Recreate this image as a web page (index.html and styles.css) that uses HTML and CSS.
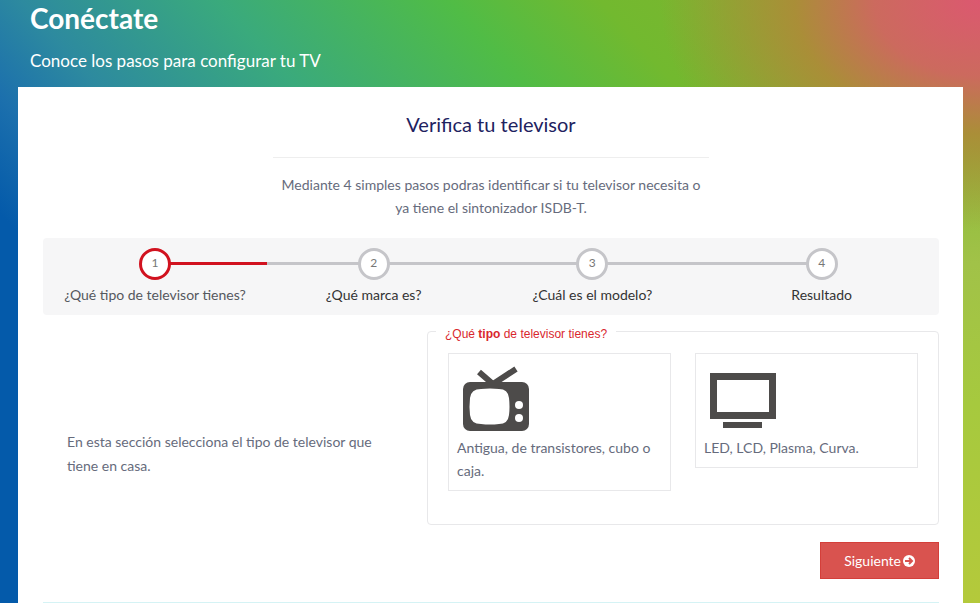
FILE: index.html
```html
<!DOCTYPE html>
<html lang="es">
<head>
  <meta charset="UTF-8">
  <meta name="viewport" content="width=device-width, initial-scale=1.0">
  <title>Conéctate</title>
  <link rel="stylesheet" href="styles.css">
</head>
<body>
  <header class="page-header">
    <h1>Conéctate</h1>
    <p>Conoce los pasos para configurar tu TV</p>
  </header>

  <main class="container">
    <section class="intro">
      <h2>Verifica tu televisor</h2>
      <hr>
      <p>Mediante 4 simples pasos podras identificar si tu televisor necesita o ya tiene el sintonizador ISDB-T.</p>
    </section>

    <ol class="steps">
      <li class="step active"><span class="number">1</span><span>¿Qué tipo de televisor tienes?</span></li>
      <li class="step"><span class="number">2</span><span>¿Qué marca es?</span></li>
      <li class="step"><span class="number">3</span><span>¿Cuál es el modelo?</span></li>
      <li class="step"><span class="number">4</span><span>Resultado</span></li>
    </ol>

    <form class="wizard">
      <div class="question">
        <p class="help">En esta sección selecciona el tipo de televisor que tiene en casa.</p>
        <fieldset>
          <legend>¿Qué <b>tipo</b> de televisor tienes?</legend>
          <div class="options">
            <label class="option">
              <input type="radio" name="tipo" value="antigua">
              <svg viewBox="0 0 66 66" aria-hidden="true">
                <path d="M16 6 L31 19 M53 3 L30 18" fill="none" stroke="#4d4b4a" stroke-width="6"/>
                <rect y="16" width="66" height="49" rx="7" fill="#4d4b4a"/>
                <path d="M18 23 Q27 22 36 23 Q45 23 46 32 Q47 41 46 49 Q45 58 36 58 Q27 59 18 58 Q8 58 7 49 Q6 41 7 32 Q8 23 18 23Z" fill="#fff"/>
                <circle cx="56" cy="39" r="4" fill="#fff"/>
                <circle cx="56" cy="52" r="4" fill="#fff"/>
              </svg>
              <span>Antigua, de transistores, cubo o caja.</span>
            </label>
            <label class="option">
              <input type="radio" name="tipo" value="plana">
              <svg viewBox="0 0 66 66" aria-hidden="true">
                <path d="M0 7H66V53H0Z M7 14V46H59V14Z" fill="#4d4b4a" fill-rule="evenodd"/>
                <rect x="13" y="56" width="39" height="6" fill="#4d4b4a"/>
              </svg>
              <span>LED, LCD, Plasma, Curva.</span>
            </label>
          </div>
        </fieldset>
      </div>
      <div class="actions">
        <button type="button">Siguiente
          <svg viewBox="0 0 12 12" aria-hidden="true">
            <circle cx="6" cy="6" r="6" fill="#fff"/>
            <path d="M2 6H9 M6 3L9 6L6 9" fill="none" stroke="#d9534f" stroke-width="2"/>
          </svg>
        </button>
      </div>
    </form>
    <hr class="divider">
  </main>
</body>
</html>
```

FILE: styles.css
```css
* { box-sizing: border-box; }
body {
  margin: 0;
  font-family: Lato, "Open Sans", sans-serif;
  font-size: 14px; line-height: 23px; color: #666b7c;
  background:
    radial-gradient(ellipse 320px 230px at 100% 0, #dc5870 0, #cc6a5e 33%, rgba(172, 140, 56, 0.95) 58%, rgba(130, 176, 48, 0) 100%),
    radial-gradient(circle at 100% 100%, #b4c93b 0, #a6c93e 200px, #a1c248 340px, rgba(150, 190, 60, 0) 520px),
    linear-gradient(48deg, #045aaa 0, #045aaa 23%, #1c70ad 30%, #2d8a9f 37%, #3aaa7c 50%, #50bc46 65%, #72b92f 75%, #8cb030 100%);
  background-attachment: fixed;
}
.page-header { padding: 0 30px; color: #fff; }
.page-header h1 {
  margin: 0; padding-top: 2px;
  font-size: 28px; line-height: 32px; font-weight: bold;
}
.page-header p {
  margin: 0; padding: 14px 0;
  font-size: 17px; line-height: 25px;
}
.container {
  margin: 0 17px 0 18px; padding: 24px 24px 0 25px;
  background: #fff;
}
.intro { max-width: 436px; margin: 0 auto; text-align: center; }
.intro h2 {
  margin: 0; font-size: 20px; line-height: 26px;
  font-weight: normal; color: #1e2260;
}
.intro hr { margin: 20px 0 15px; border: 0; border-top: 1px solid #eee; }
.intro p { margin: 0; }

.steps {
  display: grid; grid-template-columns: 21fr 20fr 21fr 22fr;
  margin: 19px 0 8px; padding: 10px 0 9px; list-style: none;
  background: #f6f6f7; border-radius: 4px; color: #333;
}
.step {
  position: relative;
  display: flex; flex-direction: column; align-items: center; gap: 3px;
}
/* connecting line behind the circles */
.step::before {
  content: ""; position: absolute;
  top: 14px; left: 0; right: 0; height: 3px;
  background: #c5c5c9;
}
.step:first-child::before { left: 50%; }
.step:last-child::before { right: 50%; }
.step.active { color: #55585e; }
.step.active::before { background: #d1121f; }
.number {
  position: relative;
  width: 32px; height: 32px;
  border: 3px solid #c5c5c9; border-radius: 50%;
  background: #fff; color: #777;
  font-size: 12px; line-height: 24px; text-align: center;
}
.active .number { border-color: #d1121f; }

.question {
  display: grid; grid-template-columns: 3fr 4fr;
  align-items: center;
}
.help { margin: 0; padding: 60px 40px 0 24px; line-height: 24px; }
fieldset {
  min-width: 0; min-height: 202px; margin: 0; padding: 14px 20px 32px;
  border: 1px solid #e8e8ea; border-radius: 4px;
}
legend {
  margin-left: -12px; padding: 6px 9px 0;
  font-family: "Liberation Sans", Arial, sans-serif;
  font-size: 12px; line-height: 10px; color: #d9272e;
}
.options {
  display: grid; grid-template-columns: 1fr 1fr; gap: 24px;
  align-items: start;
}
.option {
  display: block; padding: 12px 8px 8px;
  border: 1px solid #e8e8ea; cursor: pointer;
}
.option input { position: absolute; opacity: 0; }
.option svg { display: block; width: 66px; height: 66px; margin: 0 6px 4px; }
.option span { display: block; }
.option:has(input:checked) { border-color: #d9534f; }

.actions { display: flex; justify-content: flex-end; margin-top: 17px; }
button {
  display: flex; align-items: center; gap: 2px;
  padding: 6px 23px;
  background: #d9534f; border: 1px solid #d43f3a;
  color: #fff; font: inherit; cursor: pointer;
}
button svg { width: 12px; height: 12px; }
button:hover { background: #c9302c; }
.divider { margin: 23px 0 0; border: 0; border-top: 1px solid #d5f3f5; }
```
